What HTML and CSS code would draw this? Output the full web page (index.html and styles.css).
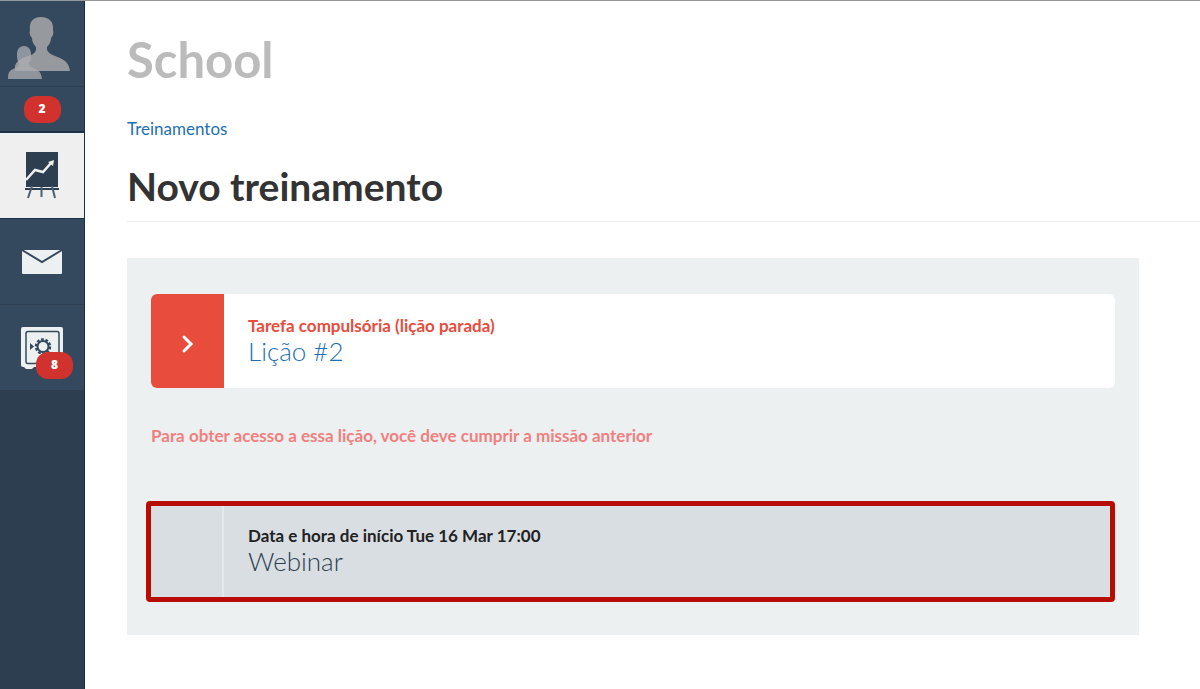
FILE: index.html
```
<!DOCTYPE html>
<html lang="pt">
  <head>
    <meta charset="UTF-8" />
    <meta name="viewport" content="width=device-width, initial-scale=1.0" />
    <title>Novo treinamento</title>
    <link rel="stylesheet" href="styles.css">
  </head>
  <body>
    <nav class="sidebar">
      <a href="#" class="nav-item" aria-label="Perfil">
        <svg class="icon" width="68" height="70" viewBox="0 0 68 70">
          <path
            fill="#96999e"
            d="M7 62v-5c1-4 4-6 8-8 8-3 12-4 13-8v-3c-2-2-4-5-4-9-2-2-3-5-2-8-1-8 3-13 11-13s13 5 12 13c1 3 0 6-2 8 0 4-2 7-4 9v3c2 4 6 5 13 8 6 3 9 6 10 13z"
          />
          <path
            fill="#adafb1"
            fill-opacity=".75"
            d="M0 70c0-6 1-8 5-10 5-2 6-3 6-6-2-3-2-5-2-9 0-5 3-8 7-8s7 3 7 8c0 4 0 6-2 9 0 3 1 4 6 6 5 2 6 4 7 10z"
          />
        </svg>
      </a>
      <a href="#" class="nav-item nav-count" aria-label="Notificações">
        <span class="badge">2</span>
      </a>
      <a href="#" class="nav-item active" aria-label="Treinamentos">
        <svg class="icon" width="36" height="48" viewBox="0 0 36 48">
          <path fill="#2c3e50" d="M2 0h32v35H2zM1 36h34v2H1z" />
          <path
            d="M8 34L4 46M17.500 35v10M28 34l3 12"
            fill="none"
            stroke="#4a5f72"
            stroke-width="2"
          />
          <path
            d="M2 28l9-10 8 2 8-9"
            fill="none"
            stroke="#efefef"
            stroke-width="2.500"
          />
          <path fill="#efefef" d="M24 10l6-2-1 6z" />
        </svg>
      </a>
      <a href="#" class="nav-item" aria-label="Mensagens">
        <svg class="icon" width="42" height="26" viewBox="0 0 42 26">
          <rect x="1" y="1" width="40" height="24" rx="1" fill="#ecf0f1" />
          <path
            d="M1 1l20 12L41 1"
            fill="none"
            stroke="#34495e"
            stroke-width="2"
          />
        </svg>
      </a>
      <a href="#" class="nav-item" aria-label="Compras">
        <svg class="icon" width="42" height="42" viewBox="0 0 42 42">
          <path
            fill="#ecf0f1"
            d="M2 0h38q2 0 2 2v36q0 2-2 2h-2l-2 2h-6l-2-2H13l-2 2H5l-2-2H2q-2 0-2-2V2q0-2 2-2z"
          />
          <rect
            x="5"
            y="4.500"
            width="33"
            height="32"
            rx="2"
            fill="none"
            stroke="#34495e"
            stroke-width="1.500"
          />
          <path fill="#34495e" d="M9 16l4 3.500-4 3.500z" />
          <circle cx="22" cy="19.500" r="5.500" fill="none" stroke="#34495e" stroke-width="2" />
          <circle
            cx="22"
            cy="19.500"
            r="7"
            fill="none"
            stroke="#34495e"
            stroke-width="2.500"
            stroke-dasharray="2.750 1.650"
          />
        </svg>
        <span class="badge badge-over">8</span>
      </a>
    </nav>

    <main class="content">
      <p class="school-name">School</p>
      <div class="breadcrumb"><a href="#">Treinamentos</a></div>
      <h1>Novo treinamento</h1>

      <div class="lessons">
        <a href="#" class="lesson">
          <span class="lesson-status status-stop">
            <svg width="14" height="20" viewBox="0 0 14 20">
              <path
                d="M3 3l7 7-7 7"
                fill="none"
                stroke="#fff"
                stroke-width="3"
                stroke-linecap="round"
              />
            </svg>
          </span>
          <span class="lesson-info">
            <span class="lesson-label label-stop">Tarefa compulsória (lição parada)</span>
            <span class="lesson-title">Lição #2</span>
          </span>
        </a>

        <p class="access-note">
          Para obter acesso a essa lição, você deve cumprir a missão anterior
        </p>

        <div class="lesson lesson-locked">
          <span class="lesson-status"></span>
          <span class="lesson-info">
            <span class="lesson-label">Data e hora de início Tue 16 Mar 17:00</span>
            <span class="lesson-title">Webinar</span>
          </span>
        </div>
      </div>
    </main>
  </body>
</html>
```

FILE: styles.css
```
* {
  box-sizing: border-box;
}

body {
  margin: 0;
  min-height: 100vh;
  display: flex;
  border-top: 1px solid #98989a;
  background-color: #fff;
  color: #333;
  font-family: Lato, "Open Sans", sans-serif;
  font-size: 17px;
  line-height: 20px;
}

a {
  color: #1f6fb2;
  text-decoration: none;
}

/* Menu lateral */
.sidebar {
  width: 85px;
  flex-shrink: 0;
  background-color: #2c3e50;
  border-right: 1px solid #14304c;
}

.nav-item {
  position: relative;
  display: flex;
  align-items: center;
  justify-content: center;
  height: 86px;
  background-color: #34495e;
  border-bottom: 1px solid #2c3e50;
}

.nav-count {
  height: 46px;
  border-bottom: 2px solid #1c3046;
}

.nav-item.active {
  background-color: #efefef;
  border-bottom-color: #1c3046;
}

.icon {
  display: block;
}

.badge {
  min-width: 37px;
  height: 27px;
  border-radius: 12px;
  background-color: #d2322d;
  color: #fff;
  font-family: "Open Sans", sans-serif;
  font-size: 12px;
  font-weight: 800;
  line-height: 26px;
  text-align: center;
}

.badge-over {
  position: absolute;
  right: 11px;
  bottom: 11px;
}

/* Conteúdo */
.content {
  flex: 1;
  padding: 32px 0 54px 42px;
}

.school-name {
  margin: 0 0 34px;
  color: #bbb;
  font-size: 49px;
  font-weight: 700;
  line-height: 52px;
}

.breadcrumb {
  margin-bottom: 25px;
}

h1 {
  margin: 0 0 36px;
  padding-bottom: 13px;
  border-bottom: 1px solid #eee;
  font-size: 39px;
  font-weight: 700;
  line-height: 44px;
}

.lessons {
  margin-right: 61px;
  padding: 36px 24px 33px;
  background-color: #ecf0f1;
}

.lesson {
  display: flex;
  min-height: 94px;
  border-radius: 6px;
  overflow: hidden;
  background-color: #fff;
}

.lesson-status {
  width: 73px;
  display: flex;
  align-items: center;
  justify-content: center;
}

.status-stop {
  padding-top: 6px;
  background-color: #e84c3d;
}

.lesson-info {
  padding: 22px 24px;
  display: flex;
  flex-direction: column;
}

.lesson-label {
  font-weight: 700;
}

.label-stop {
  color: #e84c3d;
}

.lesson-title {
  font-size: 26px;
  font-weight: 300;
  line-height: 30px;
}

.access-note {
  margin: 38px 0 55px;
  color: #f17f7f;
  font-weight: 700;
}

/* Aula bloqueada, marcada com moldura */
.lesson-locked {
  margin-left: -5px;
  border: 5px solid #b80c00;
  border-radius: 4px;
  min-height: 101px;
  background-color: #d9dee2;
  color: #222;
}

.lesson-locked .lesson-status {
  border-right: 2px solid #e4e9eb;
}

.lesson-locked .lesson-info {
  padding: 20px 24px;
}

.lesson-locked .lesson-title {
  color: #2c3e50;
}
```
